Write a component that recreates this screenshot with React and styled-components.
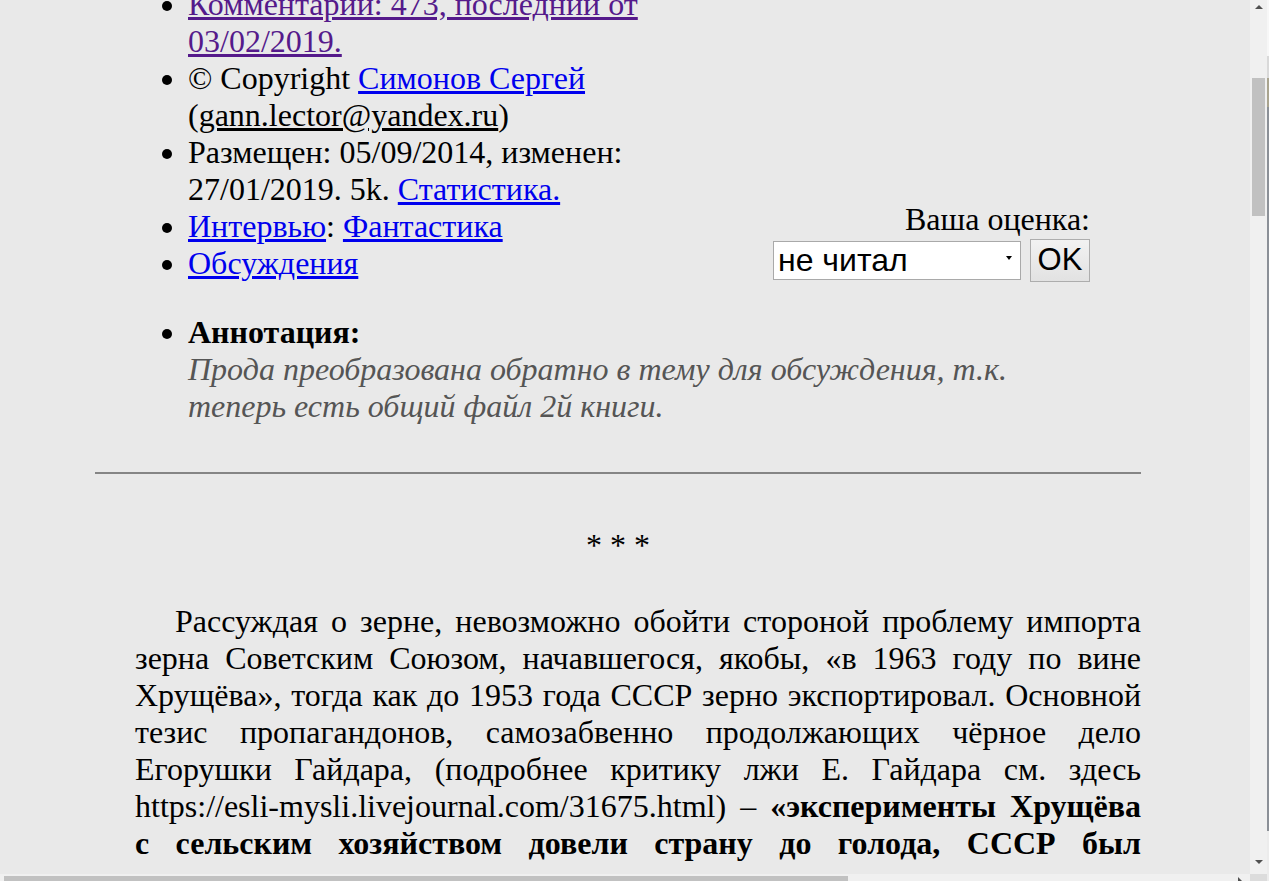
import React from 'react';
import styled, { createGlobalStyle } from 'styled-components';

const GlobalStyle = createGlobalStyle`
  html, body {
    margin: 0;
    padding: 0;
    height: 100%;
    overflow: hidden;
    background: #e9e9e9;
  }
  #root {
    height: 100%;
  }
`;

const Window = styled.div`
  display: grid;
  grid-template-columns: 1250px 17px 2px;
  grid-template-rows: 874px 7px;
  width: 1269px;
  height: 881px;
  overflow: hidden;
  background: #e9e9e9;
  color: #000;
  font-family: "Liberation Serif", "Times New Roman", serif;
  font-size: 32px;
  line-height: 37px;
`;

const Viewport = styled.div`
  grid-column: 1;
  grid-row: 1;
  overflow: hidden;
  padding-left: 95px;
`;

const Content = styled.div`
  width: 1046px;
  margin-top: -14px;
`;

const InfoRow = styled.div`
  display: flex;
  align-items: flex-end;
  justify-content: space-between;
  padding-right: 51px;
`;

const InfoList = styled.ul`
  margin: 0;
  padding-left: 93px;
  width: 517px;
  list-style: disc;
`;

const Item = styled.li``;

const Link = styled.a`
  color: ${p => (p.$visited ? '#551a8b' : '#0000ee')};
  text-decoration: underline;
  cursor: pointer;
`;

const Mail = styled.u`
  color: #000;
`;

const Rating = styled.form`
  display: flex;
  flex-direction: column;
  align-items: flex-end;
  margin: 0;
`;

const RatingControls = styled.div`
  display: flex;
  align-items: center;
  gap: 9px;
  height: 44px;
`;

const SelectBox = styled.div`
  position: relative;
  width: 248px;
  height: 39px;
`;

const Select = styled.select`
  appearance: none;
  width: 100%;
  height: 100%;
  box-sizing: border-box;
  margin: 0;
  padding: 0 0 0 4px;
  border: 1px solid #a9a9a9;
  border-radius: 0;
  background: #fff;
  color: #000;
  font-family: "Liberation Sans", Arial, sans-serif;
  font-size: 32px;
  line-height: 37px;
  outline: none;
`;

const SelectArrow = styled.span`
  position: absolute;
  right: 9px;
  top: 15px;
  width: 0;
  height: 0;
  border-left: 3px solid transparent;
  border-right: 3px solid transparent;
  border-top: 4px solid #000;
  pointer-events: none;
`;

const Button = styled.button`
  width: 60px;
  height: 43px;
  box-sizing: border-box;
  margin: 0;
  padding: 0;
  border: 1px solid #adadad;
  border-radius: 0;
  background: linear-gradient(#f2f2f2, #e2e2e2);
  color: #000;
  font-family: "Liberation Sans", Arial, sans-serif;
  font-size: 31px;
`;

const AnnotationList = styled.ul`
  margin: 32px 0 0;
  padding-left: 93px;
  padding-right: 81px;
  list-style: disc;
`;

const AnnotationText = styled.i`
  color: #555555;
`;

const Rule = styled.hr`
  margin: 47px 0 0;
  border: 0;
  border-top: 2px solid #858585;
  height: 0;
`;

const Stars = styled.div`
  margin-top: 53px;
  text-align: center;
`;

const Paragraph = styled.p`
  margin: 39px 0 0;
  padding-left: 40px;
  text-indent: 40px;
  text-align: justify;
`;

const VScroll = styled.div`
  grid-column: 2;
  grid-row: 1;
  display: flex;
  flex-direction: column;
  align-items: center;
  background: #f0f0f0;
`;

const ArrowCell = styled.div`
  display: flex;
  align-items: ${p => (p.$down ? 'flex-end' : 'flex-start')};
  justify-content: center;
  width: 100%;
  height: 17px;
  box-sizing: border-box;
  padding: ${p => (p.$down ? '0 0 10px' : '5px 0 0')};
`;

const Arrow = styled.span`
  width: 0;
  height: 0;
  border-left: 4px solid transparent;
  border-right: 4px solid transparent;
  ${p => (p.$down ? 'border-top: 4px solid #505050;' : 'border-bottom: 4px solid #505050;')}
`;

const VThumb = styled.div`
  width: 13px;
  height: 138px;
  margin-top: 61px;
  background: #c1c1c1;
`;

const Spacer = styled.div`
  flex: 1;
`;

const HScroll = styled.div`
  grid-column: 1;
  grid-row: 2;
  display: flex;
  align-items: flex-start;
  justify-content: space-between;
  background: #f0f0f0;
`;

const HThumb = styled.div`
  width: 844px;
  height: 5px;
  margin: 2px 0 0 4px;
  background: #c1c1c1;
`;

const RightArrow = styled.span`
  width: 0;
  height: 0;
  margin: 3px 8px 0 0;
  border-top: 4px solid transparent;
  border-bottom: 4px solid transparent;
  border-left: 4px solid #505050;
`;

const Corner = styled.div`
  grid-column: 2;
  grid-row: 2;
  background: #dcdcdc;
`;

const Edge = styled.div`
  grid-column: 3;
  grid-row: 1 / 3;
  background: linear-gradient(
    #f7f7f7 0, #f7f7f7 56px,
    #d9d9d9 56px, #d9d9d9 78px,
    #a9a48f 78px, #a9a48f 107px,
    #8b9097 107px, #8b9097 831px,
    #ececec 831px
  );
`;

export default function App() {
  return (
    <>
      <GlobalStyle />
      <Window>
        <Viewport>
          <Content>
            <InfoRow>
              <InfoList>
                <Item>
                  <Link $visited>Комментарии: 473, последний от 03/02/2019.</Link>
                </Item>
                <Item>
                  © Copyright <Link>Симонов Сергей</Link> (<Mail>gann.lector@yandex.ru</Mail>)
                </Item>
                <Item>
                  Размещен: 05/09/2014, изменен: 27/01/2019. 5k. <Link>Статистика.</Link>
                </Item>
                <Item>
                  <Link>Интервью</Link>: <Link>Фантастика</Link>
                </Item>
                <Item>
                  <Link>Обсуждения</Link>
                </Item>
              </InfoList>
              <Rating onSubmit={e => e.preventDefault()}>
                <span>Ваша оценка:</span>
                <RatingControls>
                  <SelectBox>
                    <Select defaultValue="0">
                      <option value="0">не читал</option>
                      <option value="10">10 шедевр</option>
                      <option value="9">9 отлично</option>
                      <option value="8">8 очень хорошо</option>
                      <option value="7">7 хорошо</option>
                    </Select>
                    <SelectArrow />
                  </SelectBox>
                  <Button type="submit">OK</Button>
                </RatingControls>
              </Rating>
            </InfoRow>

            <AnnotationList>
              <Item>
                <b>Аннотация:</b>
                <br />
                <AnnotationText>
                  Прода преобразована обратно в тему для обсуждения, т.к. теперь есть общий файл 2й книги.
                </AnnotationText>
              </Item>
            </AnnotationList>

            <Rule />

            <Stars>* * *</Stars>

            <Paragraph>
              Рассуждая о зерне, невозможно обойти стороной проблему импорта зерна Советским Союзом,
              начавшегося, якобы, «в 1963 году по вине Хрущёва», тогда как до 1953 года СССР зерно
              экспортировал. Основной тезис пропагандонов, самозабвенно продолжающих чёрное дело
              Егорушки Гайдара, (подробнее критику лжи Е. Гайдара см. здесь
              https://esli-mysli.livejournal.com/31675.html) –{' '}
              <b>
                «эксперименты Хрущёва с сельским хозяйством довели страну до голода, СССР был
                вынужден закупать зерно на западе»
              </b>
              .
            </Paragraph>
          </Content>
        </Viewport>

        <VScroll>
          <ArrowCell>
            <Arrow />
          </ArrowCell>
          <VThumb />
          <Spacer />
          <ArrowCell $down>
            <Arrow $down />
          </ArrowCell>
        </VScroll>

        <Edge />

        <HScroll>
          <HThumb />
          <RightArrow />
        </HScroll>

        <Corner />
      </Window>
    </>
  );
}
